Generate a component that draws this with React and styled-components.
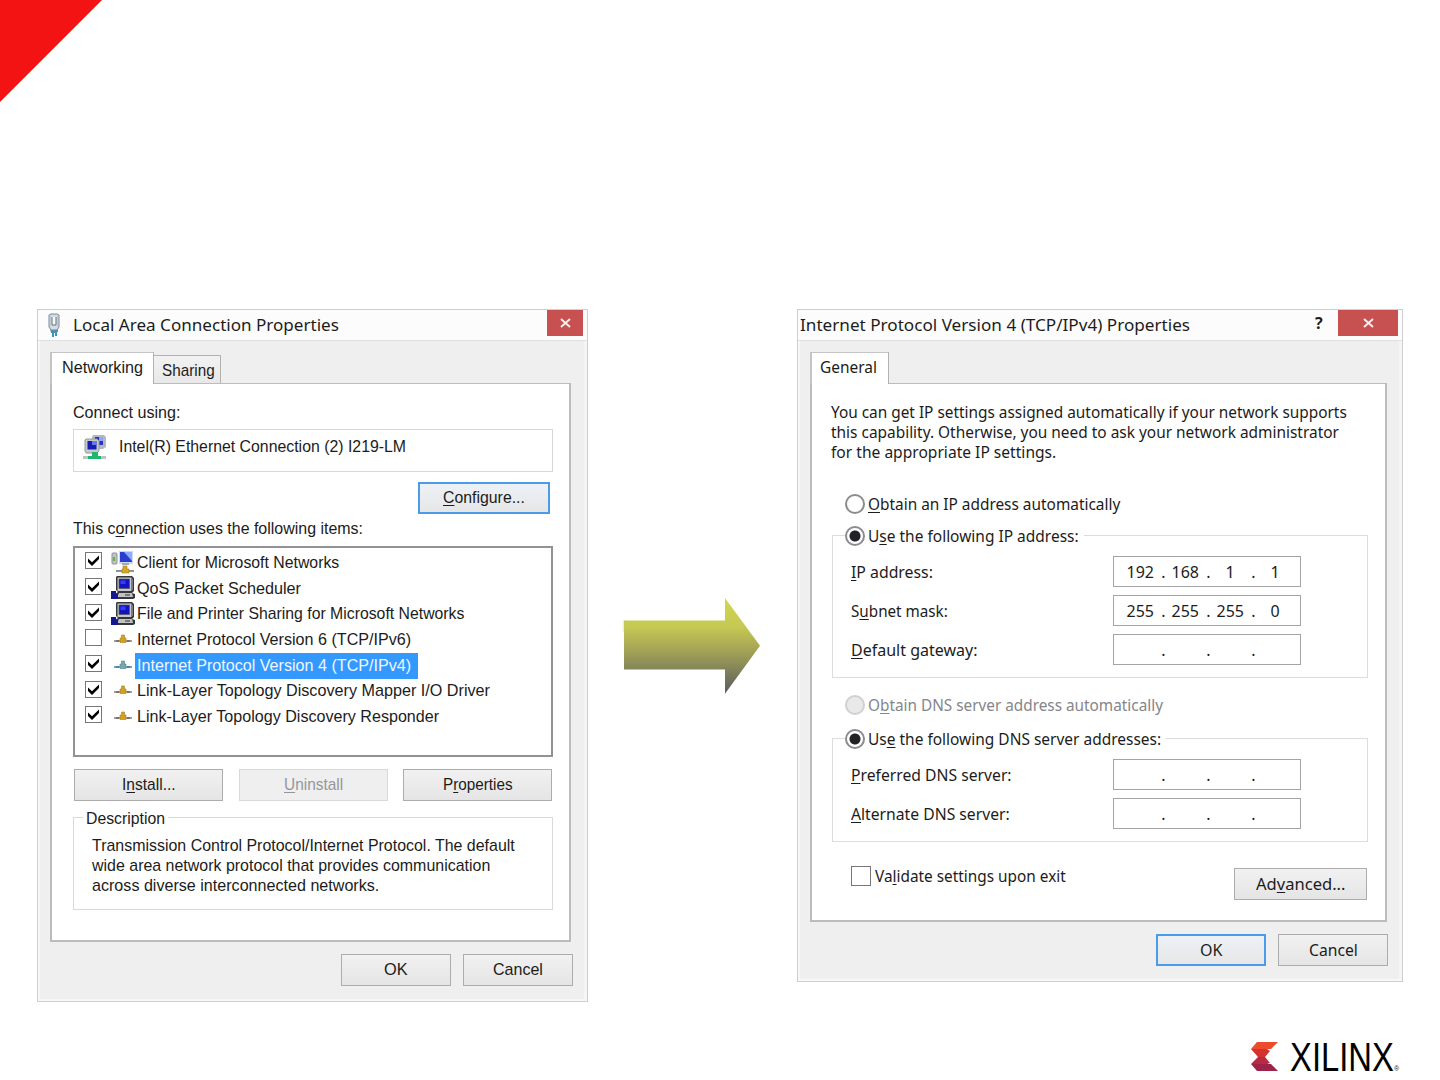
import React, { useLayoutEffect, useRef, useState } from "react";
import styled, { createGlobalStyle, css } from "styled-components";

const GlobalStyle = createGlobalStyle`
  * {
    box-sizing: border-box;
  }

  body {
    margin: 0;
    background: #fff;
    color: #1c1c20;
  }
`;

// Text squeezed or stretched to the dialog metrics
const Text = ({ width, size, tone, children }) => {
  const ref = useRef(null);
  const [ratio, setRatio] = useState(1);

  useLayoutEffect(() => {
    setRatio(width / ref.current.offsetWidth);
  }, [width]);

  return (
    <TextBox $width={width} $size={size} $tone={tone}>
      <span ref={ref} style={{ transform: `scaleX(${ratio})` }}>
        {children}
      </span>
    </TextBox>
  );
};

const items = [
  { name: "Client for Microsoft Networks", width: 202, icon: "client", checked: true },
  { name: "QoS Packet Scheduler", width: 164, icon: "computer", checked: true },
  { name: "File and Printer Sharing for Microsoft Networks", width: 327, icon: "computer", checked: true },
  { name: "Internet Protocol Version 6 (TCP/IPv6)", width: 274, icon: "protocol" },
  { name: "Internet Protocol Version 4 (TCP/IPv4)", width: 274, icon: "protocol", checked: true, selected: true },
  { name: "Link-Layer Topology Discovery Mapper I/O Driver", width: 353, icon: "protocol", checked: true },
  { name: "Link-Layer Topology Discovery Responder", width: 302, icon: "protocol", checked: true },
];

const PlugIcon = () => (
  <svg width="14" height="24" viewBox="0 0 14 24">
    <path d="M3 16h8v3h-1v4H8v-3H7v4H5v-4H4z" fill="#3f95b5" />
    <path d="M2 2l2-1h6l2 1v12l-2 3H4l-2-3z" fill="#d5dde2" stroke="#7b8994" />
    <path d="M5 4v8h4V4" fill="#f6f8fa" stroke="#62727f" />
    <path d="M3 3v11M11 3v11" stroke="#a9b6bf" />
  </svg>
);

const AdapterIcon = () => (
  <svg width="24" height="26" viewBox="0 0 24 26">
    <path d="M10 1h11l2 2v10l-3 2H9V3z" fill="#b4b9bb" />
    <path d="M12 3h8v8h-8z" fill="#2733c5" />
    <path d="M16 3h4v4h-4z" fill="#8fa4f4" />
    <path d="M3 5h11l2 2v10l-2 2H3l-1-2V6z" fill="#c6cac8" stroke="#969b9b" />
    <path d="M4.500 7h9v8.500h-9z" fill="#151fb5" />
    <path d="M9 7h4.500v4H9z" fill="#6379ec" />
    <path d="M0 22h23v3H0z" fill="#bdc5c2" />
    <path d="M9 18h6v4h3v3H5v-3h4z" fill="#22b570" />
  </svg>
);

const ClientIcon = () => (
  <svg width="24" height="24" viewBox="0 0 24 24">
    <rect x="1" y="3" width="5" height="11" rx="1" fill="#bfc6c2" stroke="#89918e" />
    <path d="M2 7h2v4H2z" fill="#67b54a" />
    <path d="M8 1h14v13H8z" fill="#d0d8eb" />
    <path d="M9 2h12v10H9z" fill="#2a3fcf" />
    <path d="M13 2h8v9z" fill="#8fabff" />
    <path d="M11 13h7v2h-7z" fill="#a3a9b4" />
    <path d="M5 20h18v2H5z" fill="#8c9496" />
    <path d="M12 16h4v3h2v4h-7v-4h1z" fill="#d6a52a" stroke="#a57c1c" strokeWidth=".6" />
  </svg>
);

const ComputerIcon = () => (
  <svg width="24" height="25" viewBox="0 0 24 25">
    <path d="M6 1h15l2 2v13l-2 2 3 1v4l-2 1H4v-5l3-2-2-2V2z" fill="#36373c" />
    <path d="M6.500 2.500h14V16h-14z" fill="#c6c8c8" />
    <path d="M8 4h10.500v9.500H8z" fill="#1413c4" stroke="#55565d" strokeWidth=".7" />
    <path d="M9.500 5.500h5V9h-5z" fill="#3142f4" />
    <path d="M8 18h13l1 4H6z" fill="#c0c2c3" />
    <path d="M20.500 3l1.500 1v11h-1.500z" fill="#777b80" />
    <path d="M14 19.500h5v1h-5z" fill="#333" />
    <path d="M0 16h5v3h2v5H0z" fill="#14188e" />
  </svg>
);

const ProtocolIcon = ({ selected }) => (
  <svg width="18" height="10" viewBox="0 0 18 10">
    <path d="M0 6h18v2H0z" fill={selected ? "#76a4c6" : "#a3a199"} />
    <path d="M2 6h3v2H2zM13 6h3v2h-3z" fill={selected ? "#4685b7" : "#77756e"} />
    <path
      d="M7.500 1h3v3h1.500v4.500H6V4h1.500z"
      fill={selected ? "#77a99f" : "#d59f20"}
      stroke={selected ? "#50869a" : "#a77d24"}
      strokeWidth=".6"
    />
  </svg>
);

const icons = { client: ClientIcon, computer: ComputerIcon, protocol: ProtocolIcon };

const CheckMark = () => (
  <svg width="13" height="13" viewBox="0 0 13 13">
    <path d="M1 4.500L5 8.300 12 1.500v3.600L5 12 1 8z" fill="#000" />
  </svg>
);

const CloseMark = () => (
  <svg width="11" height="10" viewBox="0 0 11 10">
    <path d="M1 1l9 8M10 1L1 9" stroke="#fbeeee" strokeWidth="1.900" />
  </svg>
);

const ConnectionDialog = () => (
  <Dialog $width={551} $height={693} $font='"Liberation Sans", Arial, sans-serif' $fontSize={17}>
    <TitleBar $left={9}>
      <PlugIcon />
      <TitleText>
        <Text width={266} size={17}>Local Area Connection Properties</Text>
      </TitleText>
      <CloseButton $width={36}>
        <CloseMark />
      </CloseButton>
    </TitleBar>
    <Tabs>
      <Tab $active $width={104}>
        <Text width={81}>Networking</Text>
      </Tab>
      <Tab $width={67}>
        <Text width={53}>Sharing</Text>
      </Tab>
    </Tabs>
    <Panel $width={521} $height={559} $left={21} $top={19}>
      <Line>
        <Text width={107}>Connect using:</Text>
      </Line>
      <AdapterBox>
        <AdapterIcon />
        <Text width={287}>Intel(R) Ethernet Connection (2) I219-LM</Text>
      </AdapterBox>
      <ConfigureRow>
        <Button $width={132} $focus>
          <Text width={82}><u>C</u>onfigure...</Text>
        </Button>
      </ConfigureRow>
      <Line>
        <Text width={290}>This c<u>o</u>nnection uses the following items:</Text>
      </Line>
      <ItemList>
        {items.map((item) => {
          const Icon = icons[item.icon];
          return (
            <Item key={item.name}>
              <CheckBox>{item.checked && <CheckMark />}</CheckBox>
              <IconSlot>
                <Icon selected={item.selected} />
              </IconSlot>
              <ItemName $selected={item.selected}>
                <Text width={item.width}>{item.name}</Text>
              </ItemName>
            </Item>
          );
        })}
      </ItemList>
      <Actions>
        <Button $width={149}>
          <Text width={54}>I<u>n</u>stall...</Text>
        </Button>
        <Button $width={149} $disabled>
          <Text width={59}><u>U</u>ninstall</Text>
        </Button>
        <Button $width={149}>
          <Text width={70}>P<u>r</u>operties</Text>
        </Button>
      </Actions>
      <Description>
        <Legend>
          <Text width={79}>Description</Text>
        </Legend>
        <Text width={423}>Transmission Control Protocol/Internet Protocol. The default</Text>
        <Text width={398}>wide area network protocol that provides communication</Text>
        <Text width={287}>across diverse interconnected networks.</Text>
      </Description>
    </Panel>
    <Footer>
      <Button $width={110}>
        <Text width={24}>OK</Text>
      </Button>
      <Button $width={110}>
        <Text width={50}>Cancel</Text>
      </Button>
    </Footer>
  </Dialog>
);

const AddressField = ({ octets = ["", "", "", ""] }) => (
  <Field>
    {octets.map((octet, i) => (
      <React.Fragment key={i}>
        {i > 0 && <span>.</span>}
        <Octet>{octet && <Text width={octet.length * 9}>{octet}</Text>}</Octet>
      </React.Fragment>
    ))}
  </Field>
);

const ProtocolDialog = () => (
  <Dialog $width={606} $height={673} $font='"Noto Sans", "Open Sans", sans-serif' $fontSize={16}>
    <TitleBar $left={2}>
      <Text width={390} size={17}>Internet Protocol Version 4 (TCP/IPv4) Properties</Text>
      <Help>?</Help>
      <CloseButton $width={60}>
        <CloseMark />
      </CloseButton>
    </TitleBar>
    <Tabs>
      <Tab $active $tight $width={79}>
        <Text width={57}>General</Text>
      </Tab>
    </Tabs>
    <Panel $width={577} $height={539} $left={20} $top={18}>
      <Intro>
        <Text width={516}>You can get IP settings assigned automatically if your network supports</Text>
        <Text width={508}>this capability. Otherwise, you need to ask your network administrator</Text>
        <Text width={225}>for the appropriate IP settings.</Text>
      </Intro>
      <RadioRow $top={33}>
        <Radio />
        <Text width={252}><u>O</u>btain an IP address automatically</Text>
      </RadioRow>
      <Group $top={21} $height={143}>
        <RadioLegend>
          <Radio $on />
          <Text width={211}>U<u>s</u>e the following IP address:</Text>
        </RadioLegend>
        <FieldRow>
          <Text width={82}><u>I</u>P address:</Text>
          <AddressField octets={["192", "168", "1", "1"]} />
        </FieldRow>
        <FieldRow>
          <Text width={97}>S<u>u</u>bnet mask:</Text>
          <AddressField octets={["255", "255", "255", "0"]} />
        </FieldRow>
        <FieldRow>
          <Text width={126}><u>D</u>efault gateway:</Text>
          <AddressField />
        </FieldRow>
      </Group>
      <RadioRow $top={17}>
        <Radio $disabled />
        <Text width={295} tone="#85858b">O<u>b</u>tain DNS server address automatically</Text>
      </RadioRow>
      <Group $top={23} $height={104}>
        <RadioLegend>
          <Radio $on />
          <Text width={293}>Us<u>e</u> the following DNS server addresses:</Text>
        </RadioLegend>
        <FieldRow>
          <Text width={161}><u>P</u>referred DNS server:</Text>
          <AddressField />
        </FieldRow>
        <FieldRow>
          <Text width={159}><u>A</u>lternate DNS server:</Text>
          <AddressField />
        </FieldRow>
      </Group>
      <ValidateRow>
        <CheckBox $large />
        <Text width={191}>Va<u>l</u>idate settings upon exit</Text>
        <Button $width={133}>
          <Text width={90}>Ad<u>v</u>anced...</Text>
        </Button>
      </ValidateRow>
    </Panel>
    <Footer>
      <Button $width={110} $focus>
        <Text width={22}>OK</Text>
      </Button>
      <Button $width={110}>
        <Text width={49}>Cancel</Text>
      </Button>
    </Footer>
  </Dialog>
);

const App = () => (
  <Slide>
    <GlobalStyle />
    <Corner />
    <Stage>
      <ConnectionDialog />
      <Arrow width="138" height="98" viewBox="0 0 138 98">
        <defs>
          <linearGradient id="arrowFill" x1="0" y1="0" x2="0" y2="1">
            <stop offset="0" stopColor="#d2d750" />
            <stop offset=".3" stopColor="#c6c853" />
            <stop offset=".55" stopColor="#a4a356" />
            <stop offset="1" stopColor="#5a5b60" />
          </linearGradient>
          <linearGradient id="arrowEdge">
            <stop offset="0" stopColor="#d6da70" stopOpacity="0" />
            <stop offset="1" stopColor="#d6da70" />
          </linearGradient>
        </defs>
        <path d="M0 22.500h4V34H0z" fill="url(#arrowEdge)" />
        <path d="M2 22.500h101V0l35 47.700-35 48V71.500H2z" fill="url(#arrowFill)" />
      </Arrow>
      <ProtocolDialog />
    </Stage>
    <Brand>
      <svg width="29" height="30" viewBox="0 0 29 30">
        <path d="M7 0h21l-7 7H1z" fill="#ee4a2c" />
        <path d="M1 7h16l3 2-5 6H8z" fill="#d2332f" />
        <path d="M8 15h7l5 6-3 1H1z" fill="#b92b42" />
        <path d="M1 22h20l7 7H7z" fill="#9c2448" />
      </svg>
      <BrandName>
        <Text width={104} size={41}>XILINX</Text>
      </BrandName>
      <Registered>®</Registered>
    </Brand>
  </Slide>
);

const Slide = styled.main`
  position: relative;
  width: 1440px;
  height: 1080px;
  overflow: hidden;
  padding-top: 309px;
  background: #fff;
`;

const Corner = styled.div`
  position: absolute;
  top: 0;
  left: 0;
  width: 102px;
  height: 102px;
  background: #f31313;
  clip-path: polygon(0 0, 100% 0, 0 100%);
`;

const Stage = styled.div`
  display: flex;
  align-items: flex-start;
  padding-left: 37px;
  height: 693px;
`;

const Arrow = styled.svg`
  flex: none;
  margin: 289px 37px 0 34px;
`;

const TextBox = styled.span`
  display: block;
  flex: none;
  width: ${({ $width }) => $width}px;
  font-size: ${({ $size }) => ($size ? `${$size}px` : "inherit")};
  line-height: 20px;
  color: ${({ $tone }) => $tone || "inherit"};
  white-space: pre;

  > span {
    display: inline-block;
    transform-origin: left;
  }

  u {
    text-underline-offset: 2px;
    text-decoration-thickness: 1px;
    text-decoration-skip-ink: none;
  }
`;

const Dialog = styled.section`
  flex: none;
  width: ${({ $width }) => $width}px;
  height: ${({ $height }) => $height}px;
  border: 1px solid #cfcfcf;
  background: #efefef;
  box-shadow: inset 2px -2px 0 #f7f7f7, inset -3px 0 0 #f5f5f5;
  font-family: ${({ $font }) => $font};
  font-size: ${({ $fontSize }) => $fontSize}px;
`;

const TitleBar = styled.header`
  display: flex;
  align-items: center;
  height: 31px;
  padding: 0 4px 0 ${({ $left }) => $left}px;
  border-bottom: 1px solid #dfdfdf;
  background: #fcfcfc;
`;

const TitleText = styled.div`
  margin-left: 12px;
  font-family: "Noto Sans", "Open Sans", sans-serif;
`;

const CloseButton = styled.div`
  display: flex;
  flex: none;
  align-items: center;
  justify-content: center;
  align-self: flex-start;
  width: ${({ $width }) => $width}px;
  height: 26px;
  margin-left: auto;
  background: #c75050;
`;

const Help = styled.span`
  margin: -4px 0 0 125px;
  font-size: 16px;
  font-weight: 700;
  line-height: 20px;
`;

const Tabs = styled.div`
  display: flex;
  align-items: flex-end;
  height: 42px;
  padding-left: 12px;
`;

const Tab = styled.div`
  display: flex;
  align-items: center;
  justify-content: center;
  width: ${({ $width }) => $width}px;
  height: 28px;
  padding: 2px 0 0 2px;
  border: 1px solid #b2b2b2;
  border-left: 0;
  border-bottom: 0;
  background: linear-gradient(#f2f2f2, #e8e8e8);

  ${({ $active, $tight }) =>
    $active &&
    css`
      position: relative;
      height: 32px;
      margin-bottom: -1px;
      padding: 0 ${$tight ? 3 : 1}px ${$tight ? 3 : 1}px 0;
      border-left: 2px solid #c4c4c4;
      border-top-color: #c4c4c4;
      background: #fff;
    `}
`;

const Panel = styled.div`
  display: flex;
  flex-direction: column;
  width: ${({ $width }) => $width}px;
  height: ${({ $height }) => $height}px;
  margin-left: 12px;
  padding: ${({ $top, $left }) => `${$top}px 16px 0 ${$left}px`};
  border: 1px solid #bcbcbc;
  border-width: 1px 2px 2px;
  background: #fff;
`;

const Line = styled.div`
  height: 20px;
`;

const AdapterBox = styled.div`
  display: flex;
  align-items: center;
  gap: 12px;
  width: 480px;
  height: 43px;
  margin-top: 6px;
  padding: 0 0 7px 9px;
  border: 1px solid #d8d8d8;
`;

const ConfigureRow = styled.div`
  display: flex;
  justify-content: flex-end;
  margin: 10px 3px 5px 0;
`;

const Button = styled.div`
  display: flex;
  flex: none;
  align-items: center;
  justify-content: center;
  width: ${({ $width }) => $width}px;
  height: 32px;
  border: 1px solid #acacac;
  background: linear-gradient(#f1f1f1, #e5e5e5);

  ${({ $focus }) =>
    $focus &&
    css`
      border: 2px solid #4c9bea;
      background: linear-gradient(#edf2f7, #e6e6e6);
    `}

  ${({ $disabled }) =>
    $disabled &&
    css`
      border-color: #d9d9d9;
      background: #efefef;
      color: #96969a;
    `}
`;

const ItemList = styled.div`
  width: 480px;
  height: 211px;
  margin-top: 7px;
  padding-top: 2px;
  border: 2px solid #929296;
`;

const Item = styled.div`
  display: flex;
  align-items: center;
  height: 25.7px;
  padding-left: 10px;
`;

const CheckBox = styled.div`
  display: flex;
  flex: none;
  align-items: center;
  justify-content: center;
  width: ${({ $large }) => ($large ? 20 : 17)}px;
  height: ${({ $large }) => ($large ? 20 : 17)}px;
  margin-bottom: ${({ $large }) => ($large ? 0 : 4)}px;
  border: 1px solid #77777b;
  background: #fff;
`;

const IconSlot = styled.div`
  display: flex;
  flex: none;
  align-items: center;
  justify-content: center;
  width: 24px;
  height: 25px;
  margin: 0 0 2px 9px;
`;

const ItemName = styled.div`
  padding: 3px 7px 3px 2px;
  background: ${({ $selected }) => ($selected ? "#3399ff" : "transparent")};
  color: ${({ $selected }) => ($selected ? "#eef6ff" : "inherit")};
`;

const Actions = styled.div`
  display: flex;
  justify-content: space-between;
  width: 478px;
  margin: 12px 0 0 1px;
`;

const Description = styled.div`
  width: 480px;
  height: 93px;
  margin-top: 16px;
  padding-left: 18px;
  border: 1px solid #dadada;
`;

const Legend = styled.div`
  width: 85px;
  margin: -9px 0 7px -9px;
  padding-left: 3px;
  background: #fff;
`;

const Footer = styled.footer`
  display: flex;
  justify-content: flex-end;
  gap: 12px;
  padding: 12px 14px 0 0;
`;

const Intro = styled.div`
  display: flex;
  flex-direction: column;
  height: 59px;
  margin-left: -1px;
`;

const RadioRow = styled.div`
  display: flex;
  align-items: center;
  gap: 3px;
  height: 20px;
  margin: ${({ $top }) => $top}px 0 0 13px;
`;

const Radio = styled.span`
  flex: none;
  width: 20px;
  height: 20px;
  border: 2px solid ${({ $disabled }) => ($disabled ? "#d0d0d0" : "#8c8c90")};
  border-radius: 50%;
  background: ${({ $on, $disabled }) => {
    if ($disabled) return "#e9e9e9";
    return $on ? "radial-gradient(circle, #222226 0 5px, #fff 6px)" : "#fff";
  }};
`;

const Group = styled.div`
  width: 536px;
  height: ${({ $height }) => $height}px;
  margin-top: ${({ $top }) => $top}px;
  border: 1px solid #dcdcdc;
`;

const RadioLegend = styled.div`
  display: flex;
  align-items: center;
  gap: 3px;
  width: fit-content;
  margin: -10px 0 10px 12px;
  padding-right: 5px;
  background: #fff;
`;

const FieldRow = styled.div`
  display: flex;
  align-items: center;
  justify-content: space-between;
  height: 31px;
  margin: 0 66px 8px 18px;
`;

const Field = styled.div`
  display: flex;
  align-items: center;
  flex: none;
  width: 188px;
  height: 31px;
  padding-left: 7px;
  border: 1px solid #a4a4a8;

  > span {
    width: 5px;
    text-align: center;
  }
`;

const Octet = styled.div`
  display: flex;
  justify-content: center;
  width: 40px;
  padding-right: 2px;
`;

const ValidateRow = styled.div`
  display: flex;
  align-items: center;
  gap: 4px;
  height: 32px;
  margin: 26px 2px 0 19px;

  > ${CheckBox}, > ${TextBox} {
    margin-bottom: 16px;
  }

  > ${Button} {
    margin-left: auto;
  }
`;

const Brand = styled.div`
  display: flex;
  align-items: center;
  height: 30px;
  margin: 40px 0 0 1250px;
`;

const BrandName = styled.div`
  margin-left: 11px;
  color: #000;
  font-family: "Liberation Sans", Arial, sans-serif;
`;

const Registered = styled.span`
  align-self: flex-end;
  font-family: "Liberation Sans", Arial, sans-serif;
  font-size: 7px;
  line-height: 7px;
`;

export default App;
